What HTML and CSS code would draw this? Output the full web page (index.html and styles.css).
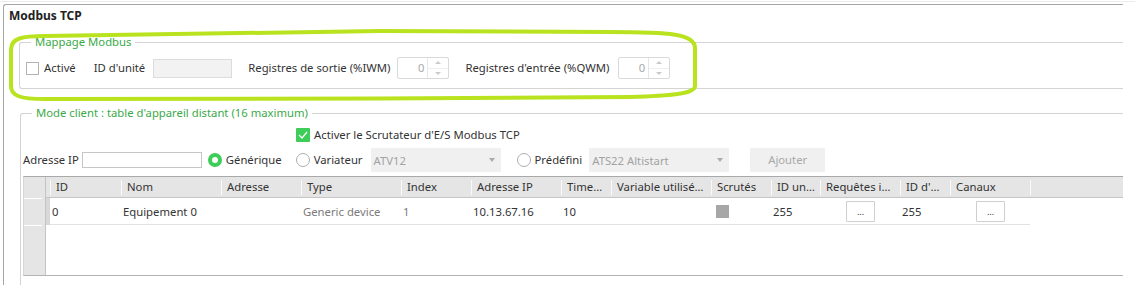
FILE: index.html
```html
<!DOCTYPE html>
<html lang="fr">
<head>
  <meta charset="UTF-8">
  <title>Modbus TCP</title>
  <link rel="stylesheet" href="styles.css">
</head>
<body>

  <div class="window">
    <div class="panel">
      <div class="panel-title">Modbus TCP</div>

      <!-- Mappage Modbus -->
      <fieldset class="group group-mapping">
        <legend>Mappage Modbus</legend>
        <div class="form-row">
          <span class="checkbox"></span>
          <span class="lbl lbl-active">Activé</span>
          <span class="lbl lbl-unit">ID d'unité</span>
          <span class="textbox textbox-unit"></span>
          <span class="lbl lbl-out">Registres de sortie (%IWM)</span>
          <span class="spin">
            <span class="spin-value">0</span>
            <span class="spin-btns"><span><i class="arrow-up"></i></span><span><i class="arrow-down"></i></span></span>
          </span>
          <span class="lbl lbl-in">Registres d'entrée (%QWM)</span>
          <span class="spin spin-in">
            <span class="spin-value">0</span>
            <span class="spin-btns"><span><i class="arrow-up"></i></span><span><i class="arrow-down"></i></span></span>
          </span>
        </div>
      </fieldset>

      <!-- Mode client -->
      <fieldset class="group group-client">
        <legend>Mode client : table d'appareil distant (16 maximum)</legend>

        <div class="scan-row">
          <span class="check-on">
            <svg width="10" height="8" viewBox="0 0 10 8"><polyline points="1,4 4,7 9,1" fill="none" stroke="#fff" stroke-width="1.3"/></svg>
          </span>
          <span class="lbl lbl-scan">Activer le Scrutateur d'E/S Modbus TCP</span>
        </div>

        <div class="add-row">
          <span class="lbl">Adresse IP</span>
          <span class="textbox textbox-ip"></span>
          <span class="radio on radio-gen"></span>
          <span class="lbl lbl-radio">Générique</span>
          <span class="radio radio-var"></span>
          <span class="lbl lbl-radio">Variateur</span>
          <span class="select select-var">ATV12<i class="caret"></i></span>
          <span class="radio radio-pre"></span>
          <span class="lbl lbl-radio">Prédéfini</span>
          <span class="select select-pre">ATS22 Altistart<i class="caret"></i></span>
          <span class="btn-add">Ajouter</span>
        </div>

        <div class="grid">
          <div class="grid-rowheads">
            <div class="corner"></div>
            <div class="rowhead"></div>
          </div>
          <div class="grid-body">
            <div class="grid-head">
              <span class="strip"></span>
              <span class="hcell c-id">ID</span>
              <span class="hcell c-nom">Nom</span>
              <span class="hcell c-adr">Adresse</span>
              <span class="hcell c-type">Type</span>
              <span class="hcell c-idx">Index</span>
              <span class="hcell c-ip">Adresse IP</span>
              <span class="hcell c-time">Time…</span>
              <span class="hcell c-var">Variable utilisé…</span>
              <span class="hcell c-scr">Scrutés</span>
              <span class="hcell c-uid">ID un…</span>
              <span class="hcell c-req">Requêtes i…</span>
              <span class="hcell c-did">ID d'…</span>
              <span class="hcell c-can">Canaux</span>
              <span class="hcell c-fill"></span>
            </div>
            <div class="grid-row">
              <span class="strip selected"></span>
              <span class="cell c-id">0</span>
              <span class="cell c-nom">Equipement 0</span>
              <span class="cell c-adr"></span>
              <span class="cell c-type muted">Generic device</span>
              <span class="cell c-idx muted">1</span>
              <span class="cell c-ip">10.13.67.16</span>
              <span class="cell c-time">10</span>
              <span class="cell c-var"></span>
              <span class="cell c-scr"><span class="scan-box"></span></span>
              <span class="cell c-uid">255</span>
              <span class="cell c-req"><span class="dots-btn">…</span></span>
              <span class="cell c-did">255</span>
              <span class="cell c-can"><span class="dots-btn">…</span></span>
            </div>
          </div>
        </div>
      </fieldset>
    </div>
  </div>

  <!-- annotation tracée à la main -->
  <svg class="highlight" width="1135" height="285" viewBox="0 0 1135 285">
    <path d="M11,50 C11,38 22,36 45,36 L380,31 L610,32 C670,32 695,34 695,48 L695,86 C695,94 670,96 630,97 L380,98.5 L45,99 C20,99 11,96 11,86 Z"
          fill="none" stroke="#b9e31e" stroke-width="4" stroke-linejoin="round"/>
  </svg>

</body>
</html>
```

FILE: styles.css
```css
* {
  box-sizing: border-box;
}
body {
  margin: 0;
  width: 1135px;
  height: 285px;
  overflow: hidden;
  background: #fff;
  font-family: "Noto Sans", "Open Sans", sans-serif;
  font-size: 11.3px;
  color: #333;
}
.window {
  margin-top: 1px;
  padding-top: 2px;
  border-top: 1px solid #ececec;
  height: 284px;
  overflow: hidden;
}
.panel {
  margin-left: 3px;
  width: 1120px;
  height: 281px;
  border-left: 1px solid #a6a6a6;
  border-top: 1px solid #a6a6a6;
  border-top-left-radius: 3px;
  overflow: hidden;
}
.panel-title {
  font-weight: bold;
  font-size: 12px;
  line-height: 16px;
  padding: 3px 0 0 5px;
  color: #222;
}

/* group boxes */
.group {
  margin: 0;
  padding: 0;
  min-width: 0;
  border: 1px solid #d4d4d4;
  border-right: none;
  border-radius: 3px 0 0 3px;
}
.group legend {
  padding: 0 4px;
  line-height: 16px;
  color: #3aaa48;
}
.group-mapping {
  margin: 10px 0 0 15px;
  padding: 7px 0 9px 6px;
}
.group-mapping legend {
  margin-left: 5px;
}
.group-client {
  margin: 16px 0 0 16px;
  padding: 6px 0 12px 2px;
}
.group-client legend {
  margin-left: 9px;
}

.lbl {
  white-space: nowrap;
  line-height: 16px;
}
.form-row {
  display: flex;
  align-items: center;
  height: 22px;
}
.checkbox {
  flex: none;
  width: 13px;
  height: 13px;
  border: 1px solid #b3b3b3;
  background: #fff;
}
.lbl-active {
  margin-left: 5px;
}
.lbl-unit {
  margin-left: 18px;
}
.textbox {
  flex: none;
  border: 1px solid #c6c6c6;
  background: #fff;
}
.textbox-unit {
  width: 79px;
  height: 19px;
  margin-left: 8px;
  background: #f2f2f2;
  border-color: #dcdcdc;
}
.lbl-out {
  margin-left: 16px;
}
.lbl-in {
  margin-left: 16px;
}
.spin {
  flex: none;
  display: flex;
  width: 52px;
  height: 22px;
  margin-left: 7px;
  border: 1px solid #d9d9d9;
  border-radius: 2px;
}
.spin-in {
  margin-left: 9px;
}
.spin-value {
  flex: 1;
  text-align: right;
  padding-right: 3px;
  line-height: 20px;
  color: #a8a8a8;
}
.spin-btns {
  width: 21px;
  display: flex;
  flex-direction: column;
  border-left: 1px solid #e6e6e6;
}
.spin-btns span {
  flex: 1;
  display: flex;
  align-items: center;
  justify-content: center;
}
.spin-btns span + span {
  border-top: 1px solid #eeeeee;
}
.arrow-up {
  border-left: 3px solid transparent;
  border-right: 3px solid transparent;
  border-bottom: 3px solid #cacaca;
}
.arrow-down {
  border-left: 3px solid transparent;
  border-right: 3px solid transparent;
  border-top: 3px solid #cacaca;
}

/* client */
.scan-row {
  display: flex;
  align-items: center;
  height: 16px;
}
.check-on {
  flex: none;
  width: 14px;
  height: 14px;
  margin-left: 273px;
  background: #3dcd58;
  border-radius: 1px;
  display: flex;
  align-items: center;
  justify-content: center;
}
.lbl-scan {
  margin-left: 4px;
}
.add-row {
  display: flex;
  align-items: center;
  height: 24px;
  margin-top: 5px;
}
.textbox-ip {
  width: 120px;
  height: 16px;
  margin-left: 3px;
}
.radio {
  flex: none;
  width: 14px;
  height: 14px;
  border-radius: 50%;
  border: 1px solid #adadad;
  background: #fff;
}
.radio.on {
  border: 4px solid #3dcd58;
}
.radio-gen {
  margin-left: 6px;
}
.radio-var {
  margin-left: 14px;
}
.radio-pre {
  margin-left: 16px;
}
.lbl-radio {
  margin-left: 4px;
}
.select {
  flex: none;
  height: 24px;
  margin-left: 8px;
  padding: 0 6px 0 3px;
  display: flex;
  align-items: center;
  justify-content: space-between;
  background: #f0f0f0;
  color: #a2a2a2;
  white-space: nowrap;
}
.select-var {
  width: 130px;
}
.select-pre {
  width: 140px;
  margin-left: 7px;
}
.caret {
  border-left: 3.5px solid transparent;
  border-right: 3.5px solid transparent;
  border-top: 4px solid #ababab;
}
.btn-add {
  flex: none;
  width: 75px;
  height: 24px;
  margin-left: 21px;
  line-height: 24px;
  text-align: center;
  background: #f0f0f0;
  color: #a8a8a8;
}

/* table */
.grid {
  display: flex;
  height: 100px;
  margin-top: 4px;
  border-top: 1px solid #a9a9a9;
  border-bottom: 1px solid #b3b3b3;
  border-left: 1px solid #d6d6d6;
}
.grid-rowheads {
  flex: none;
  width: 22px;
  background: #e5e5e5;
  border-right: 1px solid #c4c4c4;
}
.corner {
  height: 21px;
}
.rowhead {
  height: 28px;
  margin-right: 3px;
  border-top: 1px solid #fff;
  border-bottom: 1px solid #fff;
}
.grid-body {
  flex: 1;
  min-width: 0;
}
.grid-head {
  display: flex;
  height: 21px;
  background: #e5e5e5;
  border-bottom: 1px solid #c6c6c6;
}
.hcell {
  flex: none;
  padding-left: 6px;
  line-height: 20px;
  white-space: nowrap;
  overflow: hidden;
  background: linear-gradient(#fafafa, #fafafa) left center / 1px 15px no-repeat;
}
.grid-row {
  display: flex;
  height: 27px;
}
.strip {
  flex: none;
  width: 4px;
}
.strip.selected {
  background: #d8d8d8;
}
.cell {
  flex: none;
  display: flex;
  align-items: center;
  padding-left: 2px;
  white-space: nowrap;
  border-bottom: 1px solid #e2e2e2;
}
.muted {
  color: #7a7a7a;
}
.c-id { width: 71px; }
.c-nom { width: 100px; }
.c-adr { width: 80px; }
.c-type { width: 100px; }
.c-idx { width: 70px; }
.c-ip { width: 90px; }
.c-time { width: 50px; }
.c-var { width: 100px; }
.c-scr { width: 60px; }
.c-uid { width: 49px; }
.c-req { width: 80px; }
.c-did { width: 50px; }
.c-can { width: 80px; }
.c-fill { flex: 1; }
.scan-box {
  width: 13px;
  height: 13px;
  margin-left: 3px;
  background: #a7a7a7;
}
.dots-btn {
  width: 29px;
  height: 21px;
  margin-left: 24px;
  border: 1px solid #cfcfcf;
  border-radius: 1px;
  background: #fff;
  font-size: 9px;
  line-height: 19px;
  text-align: center;
  color: #333;
}

.highlight {
  position: absolute;
  top: 0;
  left: 0;
  pointer-events: none;
}
```
